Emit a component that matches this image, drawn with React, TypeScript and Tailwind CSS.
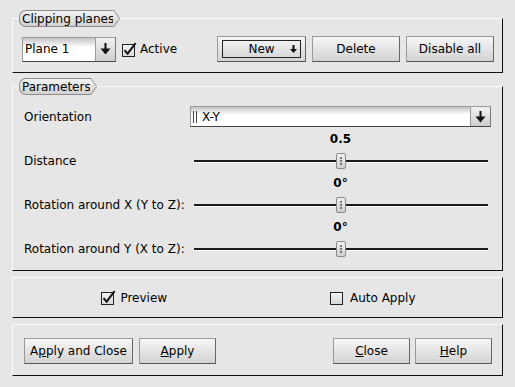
import React from "react";

function DownArrow({ small = false }: { small?: boolean }) {
  if (small) {
    return (
      <svg width="7" height="8" viewBox="0 0 7 8">
        <rect x="2.5" y="0" width="2" height="4" fill="#111" />
        <polygon points="0,4 7,4 3.5,8" fill="#111" />
      </svg>
    );
  }
  return (
    <svg width="11" height="12" viewBox="0 0 11 12">
      <rect x="4.5" y="0" width="2" height="6" fill="#111" />
      <polygon points="0.5,5.5 10.5,5.5 5.5,11.5" fill="#111" />
    </svg>
  );
}

function CheckBox({ checked }: { checked: boolean }) {
  return (
    <svg width="15" height="15" viewBox="0 0 15 15" className="shrink-0">
      <defs>
        <linearGradient id="cbfill" x1="0" y1="0" x2="0" y2="1">
          <stop offset="0" stopColor="#f4f4f4" />
          <stop offset="1" stopColor="#d6d6d6" />
        </linearGradient>
      </defs>
      <rect x="0.5" y="2.5" width="12" height="12" fill="url(#cbfill)" stroke="#222" />
      {checked && (
        <path d="M2.5 8.2 L5.6 11.6 L13.6 1.2" fill="none" stroke="#111" strokeWidth="2" />
      )}
    </svg>
  );
}

function GroupTitle({ children }: { children: React.ReactNode }) {
  return (
    <div className="absolute left-[6px] top-[-9px] flex h-[17px]">
      <div className="flex items-center rounded-l-[7px] border-y border-l border-[#8c8c8c] bg-[linear-gradient(to_bottom,#f2f2f2,#d2d2d2)] pl-[2px] leading-none">
        {children}
      </div>
      <svg width="7" height="17" viewBox="0 0 7 17" className="-ml-px">
        <defs>
          <linearGradient id="tabfill" x1="0" y1="0" x2="0" y2="1">
            <stop offset="0" stopColor="#f2f2f2" />
            <stop offset="1" stopColor="#d2d2d2" />
          </linearGradient>
        </defs>
        <polygon points="0,0.5 1,0.5 6.5,8.5 1,16.5 0,16.5" fill="url(#tabfill)" />
        <polyline points="0,0.5 1,0.5 6.5,8.5 1,16.5 0,16.5" fill="none" stroke="#8c8c8c" />
      </svg>
    </div>
  );
}

function Button({
  children,
  width,
  focused = false,
}: {
  children: React.ReactNode;
  width: string;
  focused?: boolean;
}) {
  return (
    <div
      className={`${width} flex h-[26px] items-center justify-center border border-t-[#9a9a9a] border-l-[#9a9a9a] border-b-[#555] border-r-[#666] bg-[linear-gradient(to_bottom,#f7f7f7,#d3d3d3)] font-normal`}
    >
      {focused ? (
        <div className="relative flex h-[18px] w-[calc(100%-8px)] items-center justify-center border border-[#222]">
          {children}
          <span className="absolute right-[3px] top-[4px]">
            <DownArrow small />
          </span>
        </div>
      ) : (
        children
      )}
    </div>
  );
}

function Combo({ text, width, height }: { text: React.ReactNode; width: string; height: string }) {
  return (
    <div
      className={`${width} ${height} flex border border-t-[#9a9a9a] border-l-[#9a9a9a] border-r-[#777] border-b-[#444] bg-[linear-gradient(to_bottom,#c4c4c4,#ffffff_40%,#ffffff)]`}
    >
      <div className="flex flex-1 items-center pl-[2px]">{text}</div>
      <div className="flex w-[20px] items-center justify-center border-l border-l-[#9a9a9a] bg-[linear-gradient(to_bottom,#f2f2f2,#cdcdcd)]">
        <DownArrow />
      </div>
    </div>
  );
}

function Slider({ value }: { value: string }) {
  return (
    <div className="flex flex-col">
      <div className="h-[16px] text-center font-bold leading-[16px]">{value}</div>
      <div className="relative mt-[6px] h-[16px] px-[4px]">
        <div className="absolute left-[4px] right-[3px] top-[7px] h-[2px] bg-[#1c1c1c]" />
        <div className="absolute left-[4px] right-[3px] top-[9px] h-px bg-white" />
        <div className="absolute left-[146px] top-0 flex h-[16px] w-[10px] flex-col items-center justify-center gap-[1px] rounded-[2px] border border-[#8a8a8a] bg-[linear-gradient(to_bottom,#f0f0f0,#cfcfcf)]">
          <span className="h-[2px] w-[2px] bg-[#777]" />
          <span className="h-[2px] w-[2px] bg-[#777]" />
          <span className="h-[2px] w-[2px] bg-[#777]" />
        </div>
      </div>
    </div>
  );
}

const box =
  "relative border border-t-[#fbfbfb] border-l-[#fbfbfb] border-b-[#111] border-r-[#111]";

export default function App() {
  const sliders = [
    { label: "Distance", value: "0.5" },
    { label: "Rotation around X (Y to Z):", value: "0°" },
    { label: "Rotation around Y (X to Z):", value: "0°" },
  ];

  return (
    <div className="flex h-[387px] w-[515px] flex-col bg-[#e6e6e6] px-[12px] font-['DejaVu_Sans',sans-serif] text-[12px] text-black">
      {/* Clipping planes */}
      <div className={`${box} mt-[18px] h-[55px]`}>
        <GroupTitle>Clipping planes</GroupTitle>
        <div className="flex items-center pl-[9px] pr-[8px] pt-[17px]">
          <Combo text="Plane 1" width="w-[94px]" height="h-[25px]" />
          <div className="ml-[6px] flex items-center gap-[3px]">
            <CheckBox checked />
            <span>Active</span>
          </div>
          <div className="ml-auto flex gap-[6px]">
            <Button width="w-[89px]" focused>
              New
            </Button>
            <Button width="w-[88px]">Delete</Button>
            <Button width="w-[88px]">Disable all</Button>
          </div>
        </div>
      </div>

      {/* Parameters */}
      <div className={`${box} mt-[13px] h-[185px] pl-[11px] pr-[11px] pt-[19px]`}>
        <GroupTitle>Parameters</GroupTitle>
        <div className="flex items-center">
          <span className="w-[166px]">Orientation</span>
          <Combo
            width="flex-1"
            height="h-[21px]"
            text={
              <span className="flex items-center gap-[5px]">
                <span className="flex gap-[2px]">
                  <span className="h-[12px] w-px bg-[#444]" />
                  <span className="h-[12px] w-px bg-[#444]" />
                </span>
                <span>X-Y</span>
              </span>
            }
          />
        </div>
        <div className="mt-[4px] flex flex-col gap-[6px]">
          {sliders.map((s) => (
            <div key={s.label} className="flex items-end">
              <span className="h-[16px] w-[166px] leading-[16px]">{s.label}</span>
              <div className="flex-1">
                <Slider value={s.value} />
              </div>
            </div>
          ))}
        </div>
      </div>

      {/* Preview */}
      <div className={`${box} mt-[6px] flex h-[41px] items-center`}>
        <div className="flex flex-1 items-center justify-center gap-[4px] pl-[2px]">
          <CheckBox checked />
          <span>Preview</span>
        </div>
        <div className="flex flex-1 items-center justify-center gap-[5px] pr-[10px]">
          <CheckBox checked={false} />
          <span>Auto Apply</span>
        </div>
      </div>

      {/* Dialog buttons */}
      <div className={`${box} mt-[6px] flex h-[52px] items-start pl-[11px] pr-[10px] pt-[13px]`}>
        <div className="flex gap-[6px]">
          <Button width="w-[109px]">
            <span>
              A<u>p</u>ply and Close
            </span>
          </Button>
          <Button width="w-[77px]">
            <span>
              <u>A</u>pply
            </span>
          </Button>
        </div>
        <div className="ml-auto flex gap-[5px]">
          <Button width="w-[77px]">
            <span>
              <u>C</u>lose
            </span>
          </Button>
          <Button width="w-[77px]">
            <span>
              <u>H</u>elp
            </span>
          </Button>
        </div>
      </div>
    </div>
  );
}
